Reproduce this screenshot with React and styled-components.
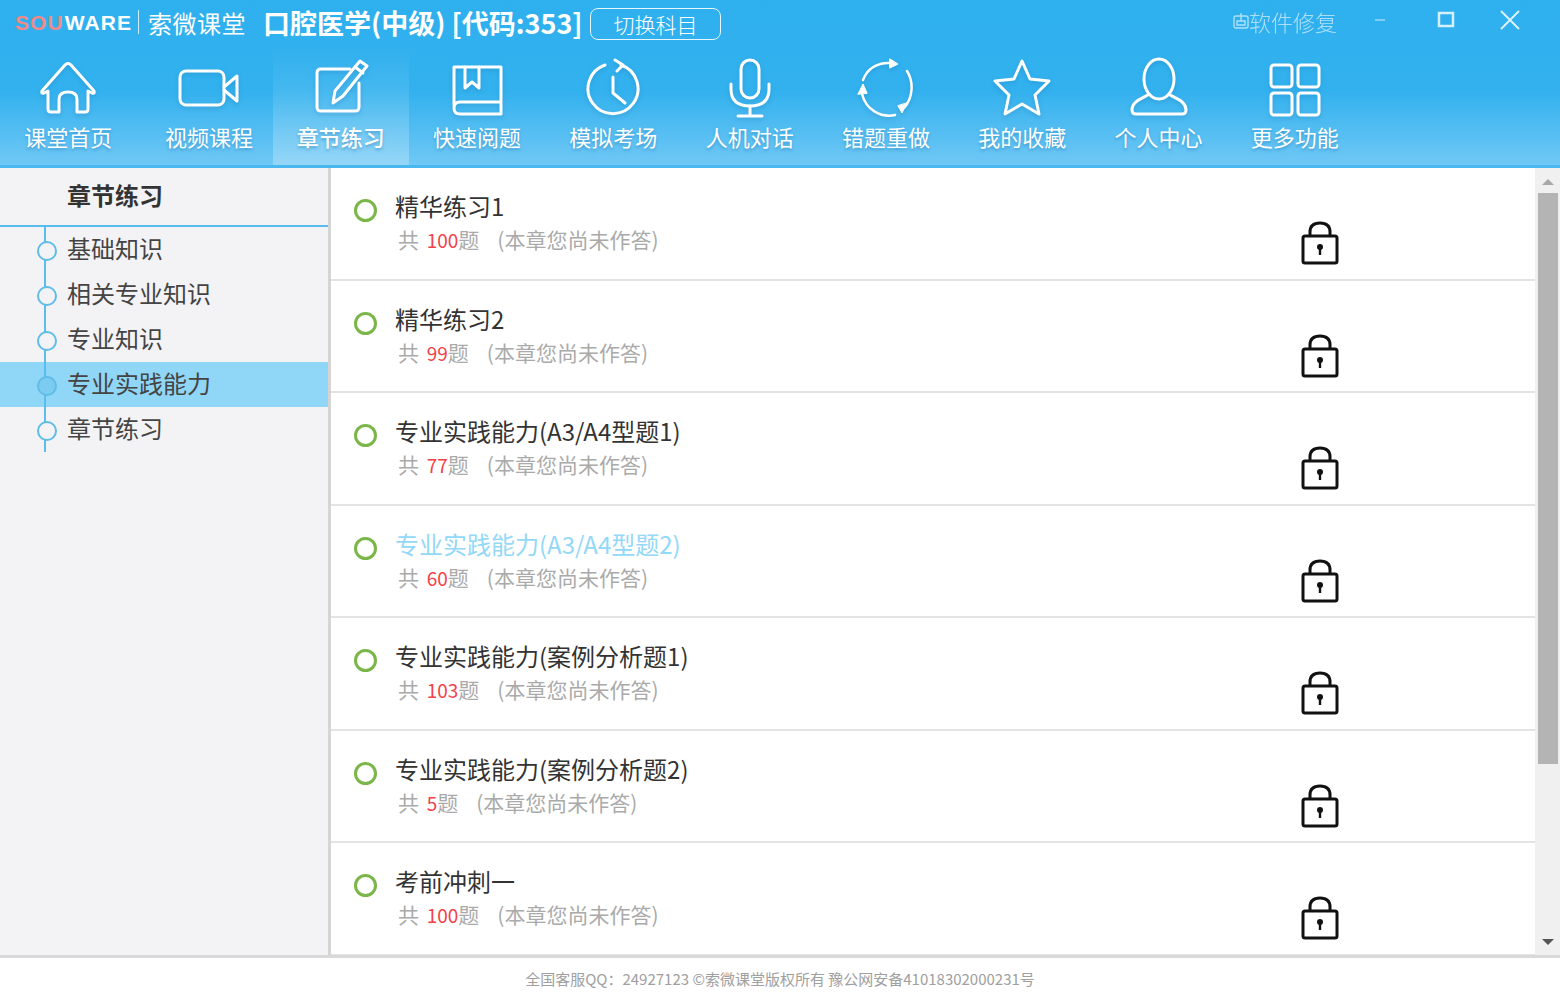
import React from 'react'
import styled, { createGlobalStyle } from 'styled-components'

const GlobalStyle = createGlobalStyle`
  html, body { margin: 0; padding: 0; background: #fff; }
  body { font-family: "Noto Sans CJK SC", "Open Sans", sans-serif; overflow: hidden; }
  * { box-sizing: border-box; }
`

const navItems = [
  { label: '课堂首页', icon: 'home' },
  { label: '视频课程', icon: 'video', shift: 9 },
  { label: '章节练习', icon: 'edit', active: true },
  { label: '快速阅题', icon: 'book' },
  { label: '模拟考场', icon: 'clock' },
  { label: '人机对话', icon: 'mic' },
  { label: '错题重做', icon: 'redo' },
  { label: '我的收藏', icon: 'star' },
  { label: '个人中心', icon: 'user' },
  { label: '更多功能', icon: 'grid' },
]

const sideItems = ['基础知识', '相关专业知识', '专业知识', '专业实践能力', '章节练习']

const rows = [
  { title: '精华练习1', count: 100 },
  { title: '精华练习2', count: 99 },
  { title: '专业实践能力(A3/A4型题1)', count: 77 },
  { title: '专业实践能力(A3/A4型题2)', count: 60, visited: true },
  { title: '专业实践能力(案例分析题1)', count: 103 },
  { title: '专业实践能力(案例分析题2)', count: 5 },
  { title: '考前冲刺一', count: 100 },
]

function NavIcon({ name }) {
  const common = { width: 64, height: 64, viewBox: '0 0 64 64', fill: 'none', stroke: '#fff', strokeWidth: 3, strokeLinecap: 'round', strokeLinejoin: 'round' }
  switch (name) {
    case 'home':
      return (
        <svg {...common}>
          <path d="M6 35 L29 9 Q32 6 35 9 L58 35 Q59 38 56 37 L52 35 L52 53 Q52 56 49 56 L41 56 L41 43 Q41 36 32 36 Q23 36 23 43 L23 56 L15 56 Q12 56 12 53 L12 35 L8 37 Q5 38 6 35 Z" />
        </svg>
      )
    case 'video':
      return (
        <svg {...common}>
          <rect x="3" y="15" width="44" height="34" rx="6" />
          <path d="M47 31 L60 20 L60 45 L47 34" />
        </svg>
      )
    case 'edit':
      return (
        <svg {...common}>
          <path d="M41 13 L12 13 Q8 13 8 17 L8 51 Q8 55 12 55 L46 55 Q50 55 50 51 L50 27" />
          <path d="M51 5 L58 10 L34 40 L24 47 L26 35 Z" />
          <path d="M46 11 L54 17" />
        </svg>
      )
    case 'book':
      return (
        <svg {...common}>
          <path d="M9 49 L9 11 L56 11 L56 58 L15 58 Q9 58 9 52 Q9 46 15 46 L56 46" />
          <path d="M20 11 L20 32 L27 26 L34 32 L34 11" />
        </svg>
      )
    case 'clock':
      return (
        <svg {...common}>
          <path d="M40 9 A25 25 0 1 1 24 9" />
          <path d="M34 4 L42 9 L36 15" />
          <path d="M32 21 L32 37 L44 47" />
        </svg>
      )
    case 'mic':
      return (
        <svg {...common}>
          <rect x="23" y="4" width="18" height="38" rx="9" />
          <path d="M13 28 L13 33 Q13 50 32 50 Q51 50 51 33 L51 28" />
          <path d="M32 50 L32 59 M20 60 L44 60" />
        </svg>
      )
    case 'redo':
      return (
        <svg {...common} strokeWidth="2.5">
          <path d="M9 24 C13 13 23 6 37 7" />
          <path d="M36 3 L44 8 L36 12 Z" fill="#fff" strokeWidth="1" />
          <path d="M53 15 C60 26 59 42 50 52" />
          <path d="M53 47 L48 57 L44 50 Z" fill="#fff" strokeWidth="1" />
          <path d="M41 59 C27 62 12 54 8 38" />
          <path d="M4 38 L9 28 L13 37 Z" fill="#fff" strokeWidth="1" />
        </svg>
      )
    case 'star':
      return (
        <svg {...common}>
          <path d="M32 5 L40 23 L59 25 L45 39 L49 58 L32 48 L15 58 L19 39 L5 25 L24 23 Z" />
        </svg>
      )
    case 'user':
      return (
        <svg {...common}>
          <ellipse cx="32" cy="23" rx="15" ry="20" />
          <path d="M22 38 C18 42 5 44 5 54 Q5 58 9 58 L55 58 Q59 58 59 54 C59 44 46 42 42 38" />
        </svg>
      )
    default:
      return (
        <svg {...common}>
          <rect x="8" y="9" width="21" height="22" rx="3" />
          <rect x="35" y="9" width="21" height="22" rx="3" />
          <rect x="8" y="37" width="21" height="22" rx="3" />
          <rect x="35" y="37" width="21" height="22" rx="3" />
        </svg>
      )
  }
}

function LockIcon() {
  return (
    <svg width="38" height="44" viewBox="0 0 38 44" fill="none" stroke="#111" strokeWidth="3" strokeLinejoin="round">
      <rect x="2" y="15" width="34" height="27" rx="2" />
      <path d="M9 15 L9 11 Q9 2 19 2 Q29 2 29 11 L29 15" />
      <circle cx="19" cy="26" r="3" fill="#111" stroke="none" />
      <path d="M19 27 L19 34" strokeWidth="2.4" />
    </svg>
  )
}

export default function App() {
  return (
    <Page>
      <GlobalStyle />
      <Header>
        <TitleBar>
          <Logo><b>SOU</b>WARE</Logo>
          <LogoDivider />
          <Brand>索微课堂</Brand>
          <Subject>口腔医学(中级) [代码:353]</Subject>
          <SwitchButton>切换科目</SwitchButton>
          <Repair>
            <svg width="16" height="18" viewBox="0 0 16 18" fill="none" stroke="#fff" strokeWidth="1.4">
              <rect x="1" y="4" width="14" height="12" rx="2" />
              <path d="M8 1 L8 9 M4 9 L12 9 L12 13 L4 13 Z" />
            </svg>
            软件修复
          </Repair>
          <WindowButtons>
            <svg width="20" height="20" viewBox="0 0 20 20" stroke="#fff" fill="none" strokeWidth="1.5" opacity="0.5"><path d="M1 10 L11 10" /></svg>
            <svg width="20" height="20" viewBox="0 0 20 20" stroke="#fff" fill="none" strokeWidth="2.5" opacity="0.8"><rect x="3" y="3" width="14" height="13" /></svg>
            <svg width="24" height="24" viewBox="0 0 24 24" stroke="#fff" fill="none" strokeWidth="1.8" opacity="0.85"><path d="M3 3 L21 21 M21 3 L3 21" /></svg>
          </WindowButtons>
        </TitleBar>
        <Nav>
          {navItems.map((item) => (
            <NavItem key={item.label} $active={item.active} $shift={item.shift}>
              <NavIcon name={item.icon} />
              <NavLabel $active={item.active}>{item.label}</NavLabel>
            </NavItem>
          ))}
        </Nav>
      </Header>
      <Body>
        <Sidebar>
          <SideTitle>章节练习</SideTitle>
          {sideItems.map((name, index) => (
            <SideItem key={name} $active={index === 3}>{name}</SideItem>
          ))}
        </Sidebar>
        <Content>
          <List>
            {rows.map((row) => (
              <Row key={row.title}>
                <Ring />
                <RowText>
                  <RowTitle $visited={row.visited}>{row.title}</RowTitle>
                  <RowSub>共 <Count>{row.count}</Count>题<Note>(本章您尚未作答)</Note></RowSub>
                </RowText>
                <LockWrap><LockIcon /></LockWrap>
              </Row>
            ))}
          </List>
          <Scrollbar>
            <ArrowUp />
            <Thumb />
            <ArrowDown />
          </Scrollbar>
        </Content>
      </Body>
      <Footer>全国客服QQ：24927123 ©索微课堂版权所有 豫公网安备41018302000231号</Footer>
    </Page>
  )
}

const Page = styled.div`
  width: 1560px;
  height: 993px;
  display: flex;
  flex-direction: column;
  overflow: hidden;
`

const Header = styled.header`
  height: 168px;
  flex: none;
  background: linear-gradient(to bottom, #2fb0ee 0%, #32b1ee 55%, #70c8f5 100%);
  border-bottom: 3px solid #49b8f0;
  color: #fff;
`

const TitleBar = styled.div`
  height: 48px;
  display: flex;
  align-items: center;
  padding: 0 0 4px 15px;
`

// the logo face is narrow and spaced out, small Liberation Sans with tracking comes closest
const Logo = styled.div`
  width: 123px;
  font-family: "Liberation Sans", sans-serif;
  font-size: 21px;
  font-weight: 700;
  letter-spacing: 1.1px;
  line-height: 1;
  white-space: nowrap;
  color: #fff;
  b { color: #f08a8a; font-weight: 700; margin-right: 1px; }
`

const LogoDivider = styled.span`
  width: 1px;
  height: 24px;
  background: #cdeefc;
  margin-right: 9px;
`

const Brand = styled.div`
  font-size: 24px;
  letter-spacing: 0.5px;
  width: 115px;
`

const Subject = styled.div`
  font-size: 27px;
  font-weight: 700;
  white-space: nowrap;
  width: 327px;
`

const SwitchButton = styled.div`
  width: 131px;
  height: 32px;
  border: 1.5px solid #e6f6fe;
  border-radius: 8px;
  margin-top: 4px;
  font-size: 21px;
  font-weight: 300;
  line-height: 30px;
  text-align: center;
`

const Repair = styled.div`
  margin-left: auto;
  display: flex;
  align-items: center;
  font-size: 22px;
  font-weight: 300;
  opacity: 0.6;
  margin-top: -2px;
`

const WindowButtons = styled.div`
  display: flex;
  align-items: center;
  gap: 42px;
  margin: -4px 38px 0 37px;
`

const Nav = styled.nav`
  height: 117px;
  display: flex;
`

const NavItem = styled.div`
  width: 136.3px;
  flex: none;
  display: flex;
  flex-direction: column;
  align-items: center;
  padding: 8px 0 0 ${(p) => p.$shift || 0}px;
  background: ${(p) => (p.$active ? 'linear-gradient(to bottom, rgba(255,255,255,0) 0%, rgba(255,255,255,0.26) 100%)' : 'none')};
  svg { filter: drop-shadow(0 2px 2px rgba(30, 110, 170, 0.3)); }
`

const NavLabel = styled.div`
  font-size: 22px;
  line-height: 30px;
  margin-top: 1px;
  white-space: nowrap;
  font-weight: ${(p) => (p.$active ? 500 : 400)};
  text-shadow: 0 2px 3px rgba(30, 110, 170, 0.45);
`

const Body = styled.div`
  flex: 1;
  display: flex;
  min-height: 0;
  border-bottom: 3px solid #d9d9d9;
`

const Sidebar = styled.aside`
  width: 331px;
  flex: none;
  background: #f3f3f5;
  border-right: 3px solid #d5d5d5;
`

const SideTitle = styled.div`
  height: 59px;
  padding: 10px 0 0 67px;
  border-bottom: 2px solid #5bbcee;
  font-size: 24px;
  font-weight: 700;
  line-height: 34px;
  color: #333;
`

const SideItem = styled.div`
  position: relative;
  height: 45px;
  padding-left: 67px;
  font-size: 24px;
  line-height: 42px;
  color: #444;
  background: ${(p) => (p.$active ? '#8fd6f7' : 'transparent')};
  &::before {
    content: "";
    position: absolute;
    left: 44px;
    top: 0;
    bottom: 0;
    width: 2px;
    background: #5bbcee;
  }
  &::after {
    content: "";
    position: absolute;
    left: 37px;
    top: 14px;
    width: 16px;
    height: 16px;
    border-radius: 50%;
    border: 2px solid #5fbde8;
    background: ${(p) => (p.$active ? '#7ccbf0' : '#f3f3f5')};
  }
`

const Content = styled.main`
  flex: 1;
  display: flex;
  min-width: 0;
  background: #fff;
`

const List = styled.div`
  flex: 1;
  min-width: 0;
  overflow: hidden;
`

const Row = styled.div`
  height: 112.5px;
  display: flex;
  align-items: flex-start;
  padding: 22px 196px 0 23px;
  border-bottom: 2px solid #e3e3e3;
`

const Ring = styled.span`
  width: 23px;
  height: 23px;
  flex: none;
  margin-top: 9px;
  border: 3px solid #7ab648;
  border-radius: 50%;
`

const RowText = styled.div`
  flex: 1;
  margin-left: 18px;
`

const RowTitle = styled.div`
  font-size: 24px;
  line-height: 32px;
  color: ${(p) => (p.$visited ? '#93d8f7' : '#333')};
`

const RowSub = styled.div`
  font-size: 21px;
  line-height: 30px;
  margin: 2px 0 0 3px;
  color: #aaa;
`

const Count = styled.span`
  margin-left: 3px;
  font-size: 19px;
  color: #f5404a;
`

const Note = styled.span`
  margin-left: 18px;
`

const LockWrap = styled.div`
  width: 38px;
  flex: none;
  margin-top: 31px;
  svg { display: block; }
`

const Scrollbar = styled.div`
  width: 25px;
  flex: none;
  background: #f0f0f0;
  display: flex;
  flex-direction: column;
  align-items: center;
`

const ArrowUp = styled.span`
  margin-top: 11px;
  border-left: 6px solid transparent;
  border-right: 6px solid transparent;
  border-bottom: 6px solid #a8a8a8;
`

const Thumb = styled.div`
  width: 20px;
  height: 571px;
  margin-top: 8px;
  background: #b4b4b4;
`

const ArrowDown = styled.span`
  margin-top: auto;
  margin-bottom: 10px;
  border-left: 6px solid transparent;
  border-right: 6px solid transparent;
  border-top: 6px solid #555;
`

const Footer = styled.footer`
  height: 35px;
  flex: none;
  background: #fff;
  text-align: center;
  font-size: 15px;
  line-height: 42px;
  color: #a0a0a0;
`
